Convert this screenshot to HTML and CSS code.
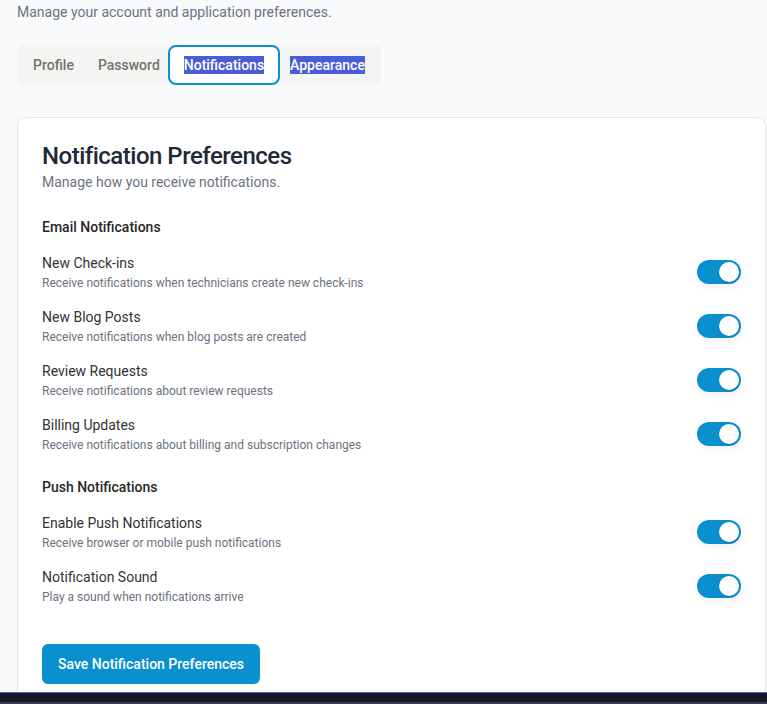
FILE: index.html
```html
<!DOCTYPE html>
<html lang="en">
<head>
<meta charset="utf-8">
<title>Settings</title>
<link rel="stylesheet" href="styles.css">
</head>
<body>
<main class="page">
  <header class="page-head">
    <h1 class="page-title">Settings</h1>
    <p class="page-sub">Manage your account and application preferences.</p>
  </header>

  <nav class="tabs">
    <button class="tab">Profile</button>
    <button class="tab">Password</button>
    <button class="tab tab-active"><span class="sel">Notifications</span></button>
    <button class="tab"><span class="sel">Appearance</span></button>
  </nav>

  <section class="card">
    <div class="card-head">
      <h2 class="card-title">Notification Preferences</h2>
      <p class="card-sub">Manage how you receive notifications.</p>
    </div>

    <div class="group">
      <h3 class="group-title">Email Notifications</h3>
      <div class="rows">
        <div class="row">
          <div class="row-text">
            <div class="row-label">New Check-ins</div>
            <div class="row-desc">Receive notifications when technicians create new check-ins</div>
          </div>
          <span class="toggle"><span class="knob"></span></span>
        </div>
        <div class="row">
          <div class="row-text">
            <div class="row-label">New Blog Posts</div>
            <div class="row-desc">Receive notifications when blog posts are created</div>
          </div>
          <span class="toggle"><span class="knob"></span></span>
        </div>
        <div class="row">
          <div class="row-text">
            <div class="row-label">Review Requests</div>
            <div class="row-desc">Receive notifications about review requests</div>
          </div>
          <span class="toggle"><span class="knob"></span></span>
        </div>
        <div class="row">
          <div class="row-text">
            <div class="row-label">Billing Updates</div>
            <div class="row-desc">Receive notifications about billing and subscription changes</div>
          </div>
          <span class="toggle"><span class="knob"></span></span>
        </div>
      </div>
    </div>

    <div class="group">
      <h3 class="group-title">Push Notifications</h3>
      <div class="rows">
        <div class="row">
          <div class="row-text">
            <div class="row-label">Enable Push Notifications</div>
            <div class="row-desc">Receive browser or mobile push notifications</div>
          </div>
          <span class="toggle"><span class="knob"></span></span>
        </div>
        <div class="row">
          <div class="row-text">
            <div class="row-label">Notification Sound</div>
            <div class="row-desc">Play a sound when notifications arrive</div>
          </div>
          <span class="toggle"><span class="knob"></span></span>
        </div>
      </div>
    </div>

    <button class="save-btn">Save Notification Preferences</button>
  </section>
</main>
<div class="bottom-bar"></div>
</body>
</html>
```
FILE: styles.css
```css
* { box-sizing: border-box; }

html, body {
  margin: 0;
  padding: 0;
  background: #f9fafb;
  font-family: Roboto, "Open Sans", "Liberation Sans", sans-serif;
  color: #333;
}

.page {
  padding: 0 1px 40px 17px;
}

.page-head {
  margin-top: -32px;
}

.page-title {
  margin: 0;
  font-size: 24px;
  line-height: 32px;
  font-weight: 500;
  color: #1f2937;
}

.page-sub {
  margin: 2px 0 0;
  font-size: 14px;
  line-height: 20px;
  color: #6b7280;
}

.tabs {
  display: inline-flex;
  margin-top: 23px;
  height: 40px;
  padding: 0 4px;
  background: #f4f4f2;
  border-radius: 6px;
}

.tab {
  font-family: inherit;
  font-size: 14px;
  font-weight: 500;
  color: #78716c;
  background: transparent;
  border: 0;
  padding: 0 12px;
  height: 40px;
  cursor: pointer;
}

.tab-password {
  padding-right: 10px;
}

.tab-active {
  background: #fff;
  border: 2px solid #0a8fcf;
  border-radius: 8px;
  padding: 0 14px;
  margin: 0 -2px 0 -4px;
}

.sel {
  background: #4b5dd6;
  color: #fff;
  padding: 1px 0;
}

.card {
  margin-top: 32px;
  background: #fff;
  border: 1px solid #e5e7eb;
  border-radius: 8px;
  padding: 24px;
}

.card-head {
  margin-bottom: 25px;
}

.card-title {
  margin: 0;
  font-size: 24px;
  line-height: 28px;
  font-weight: 500;
  letter-spacing: -0.5px;
  color: #1f2937;
}

.card-sub {
  margin: 2px 0 0;
  font-size: 14px;
  line-height: 20px;
  color: #6b7280;
}

.group {
  margin-bottom: 24px;
}

.group-title {
  margin: 0 0 16px;
  font-size: 14px;
  line-height: 20px;
  font-weight: 500;
  color: #27272a;
}

.rows {
  display: flex;
  flex-direction: column;
  gap: 16px;
}

.row {
  display: flex;
  align-items: center;
  justify-content: space-between;
}

.row-label {
  font-size: 14px;
  line-height: 20px;
  color: #333;
}

.row-desc {
  margin-top: 2px;
  font-size: 12px;
  line-height: 16px;
  color: #6b7280;
}

.toggle {
  position: relative;
  width: 44px;
  height: 24px;
  border-radius: 12px;
  background: #0a8fcf;
  flex: none;
  box-shadow: 2px 4px 8px rgba(0, 0, 0, 0.05);
}

.knob {
  position: absolute;
  top: 2px;
  right: 2px;
  width: 20px;
  height: 20px;
  border-radius: 50%;
  background: #fff;
  box-shadow: 0 1px 2px rgba(0, 0, 0, 0.15);
}

.save-btn {
  margin-top: 15px;
  font-family: inherit;
  font-size: 14px;
  font-weight: 500;
  color: #fff;
  background: #0a8fcf;
  border: 0;
  border-radius: 6px;
  height: 40px;
  padding: 0 16px;
  cursor: pointer;
}

.bottom-bar {
  position: fixed;
  left: 0;
  right: 0;
  bottom: 0;
  height: 12px;
  background: #111827;
  border-top: 1px solid #6d4fe0;
  border-bottom: 2px solid #3b3b44;
}
```
